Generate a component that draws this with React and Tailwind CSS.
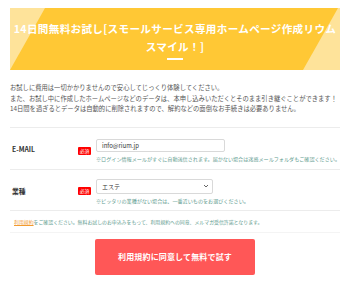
export default function App() {
  const jp = { fontFamily: '"Noto Sans CJK JP", "Noto Sans", sans-serif' };

  return (
    <div className="w-[350px] h-[300px] bg-white overflow-hidden" style={jp}>
      {/* タイトル帯 */}
      <div className="px-[10px] pt-[8px]">
        <div className="relative h-[62px] bg-[#fee39a] overflow-hidden">
          <svg className="absolute inset-0" width="330" height="62" viewBox="0 0 330 62">
            <polygon points="35,0 328,0 293,62 0,62" fill="#ffc835" />
          </svg>
          <div className="relative flex flex-col items-center pt-[12px]">
            <h1 className="text-white font-bold text-[10.6px] leading-[18px] tracking-[0.03em] text-center">
              14日間無料お試し[スモールサービス専用ホームページ作成リウム
              <br />
              スマイル！]
            </h1>
            <span className="mt-[2px] w-[16px] h-[2px] bg-white" />
          </div>
        </div>
      </div>

      {/* 説明文 */}
      <div className="mx-[10px] pt-[13px] pb-[12px] border-b border-[#ececec]">
        <p className="text-[#555] text-[6.3px] leading-[10.5px]">
          お試しに費用は一切かかりませんので安心してじっくり体験してください。
          <br />
          また、お試し中に作成したホームページなどのデータは、本申し込みいただくとそのまま引き継ぐことができます！
          <br />
          14日間を過ぎるとデータは自動的に削除されますので、解約などの面倒なお手続きは必要ありません。
        </p>
      </div>

      {/* E-MAIL */}
      <div className="mx-[10px] flex border-b border-[#ececec] pt-[11px] pb-[6px]">
        <div className="w-[68px] pl-[2px] pt-[5px] text-[6.8px] font-bold text-[#333]">E-MAIL</div>
        <div className="w-[18px] pt-[8px]">
          <span className="block w-[13px] h-[8px] rounded-[1px] bg-[#f00] text-white text-[4.8px] leading-[8px] text-center">必須</span>
        </div>
        <div className="flex-1">
          <div className="w-[129px] h-[13px] border border-[#d9d9d9] rounded-[2px] pl-[5px] text-[6px] leading-[11px] text-[#333]">
            info@rium.jp
          </div>
          <p className="mt-[3px] text-[5.1px] leading-[8px] text-[#5f9c90] whitespace-nowrap">
            ※ログイン情報メールがすぐに自動送信されます。届かない場合は迷惑メールフォルダもご確認ください。
          </p>
        </div>
      </div>

      {/* 業種 */}
      <div className="mx-[10px] flex border-b border-[#ececec] pt-[9px] pb-[5px]">
        <div className="w-[68px] pl-[2px] pt-[7px] text-[6.8px] font-bold text-[#333]">業種</div>
        <div className="w-[18px] pt-[8px]">
          <span className="block w-[13px] h-[8px] rounded-[1px] bg-[#f00] text-white text-[4.8px] leading-[8px] text-center">必須</span>
        </div>
        <div className="flex-1">
          <div className="w-[117px] h-[15px] border border-[#d9d9d9] rounded-[2px] pl-[5px] pr-[3px] flex items-center justify-between text-[6px] text-[#333]">
            <span>エステ</span>
            <svg width="6" height="4" viewBox="0 0 6 4">
              <path d="M1 1l2 2 2-2" stroke="#555" strokeWidth="0.9" fill="none" />
            </svg>
          </div>
          <p className="mt-[3px] text-[5.1px] leading-[8px] text-[#5f9c90] whitespace-nowrap">
            ※ピッタリの業種がない場合は、一番近いものをお選びください。
          </p>
        </div>
      </div>

      {/* 規約 */}
      <div className="mx-[10px] border-b border-[#f4f4f4] pl-[4px] pt-[7px] pb-[6px]">
        <p className="text-[4.9px] leading-[8px] text-[#5f9c90] whitespace-nowrap">
          <span className="text-[#f29a2e] underline">利用規約</span>
          をご確認ください。無料お試しのお申込みをもって、利用規約への同意、メルマガ受信許諾となります。
        </p>
      </div>

      {/* ボタン */}
      <div className="flex justify-center pt-[6px]">
        <button className="w-[160px] h-[36px] rounded-[2px] bg-[#ff5757] text-white text-[8px] font-bold tracking-[0.02em]">
          利用規約に同意して無料で試す
        </button>
      </div>
    </div>
  );
}
